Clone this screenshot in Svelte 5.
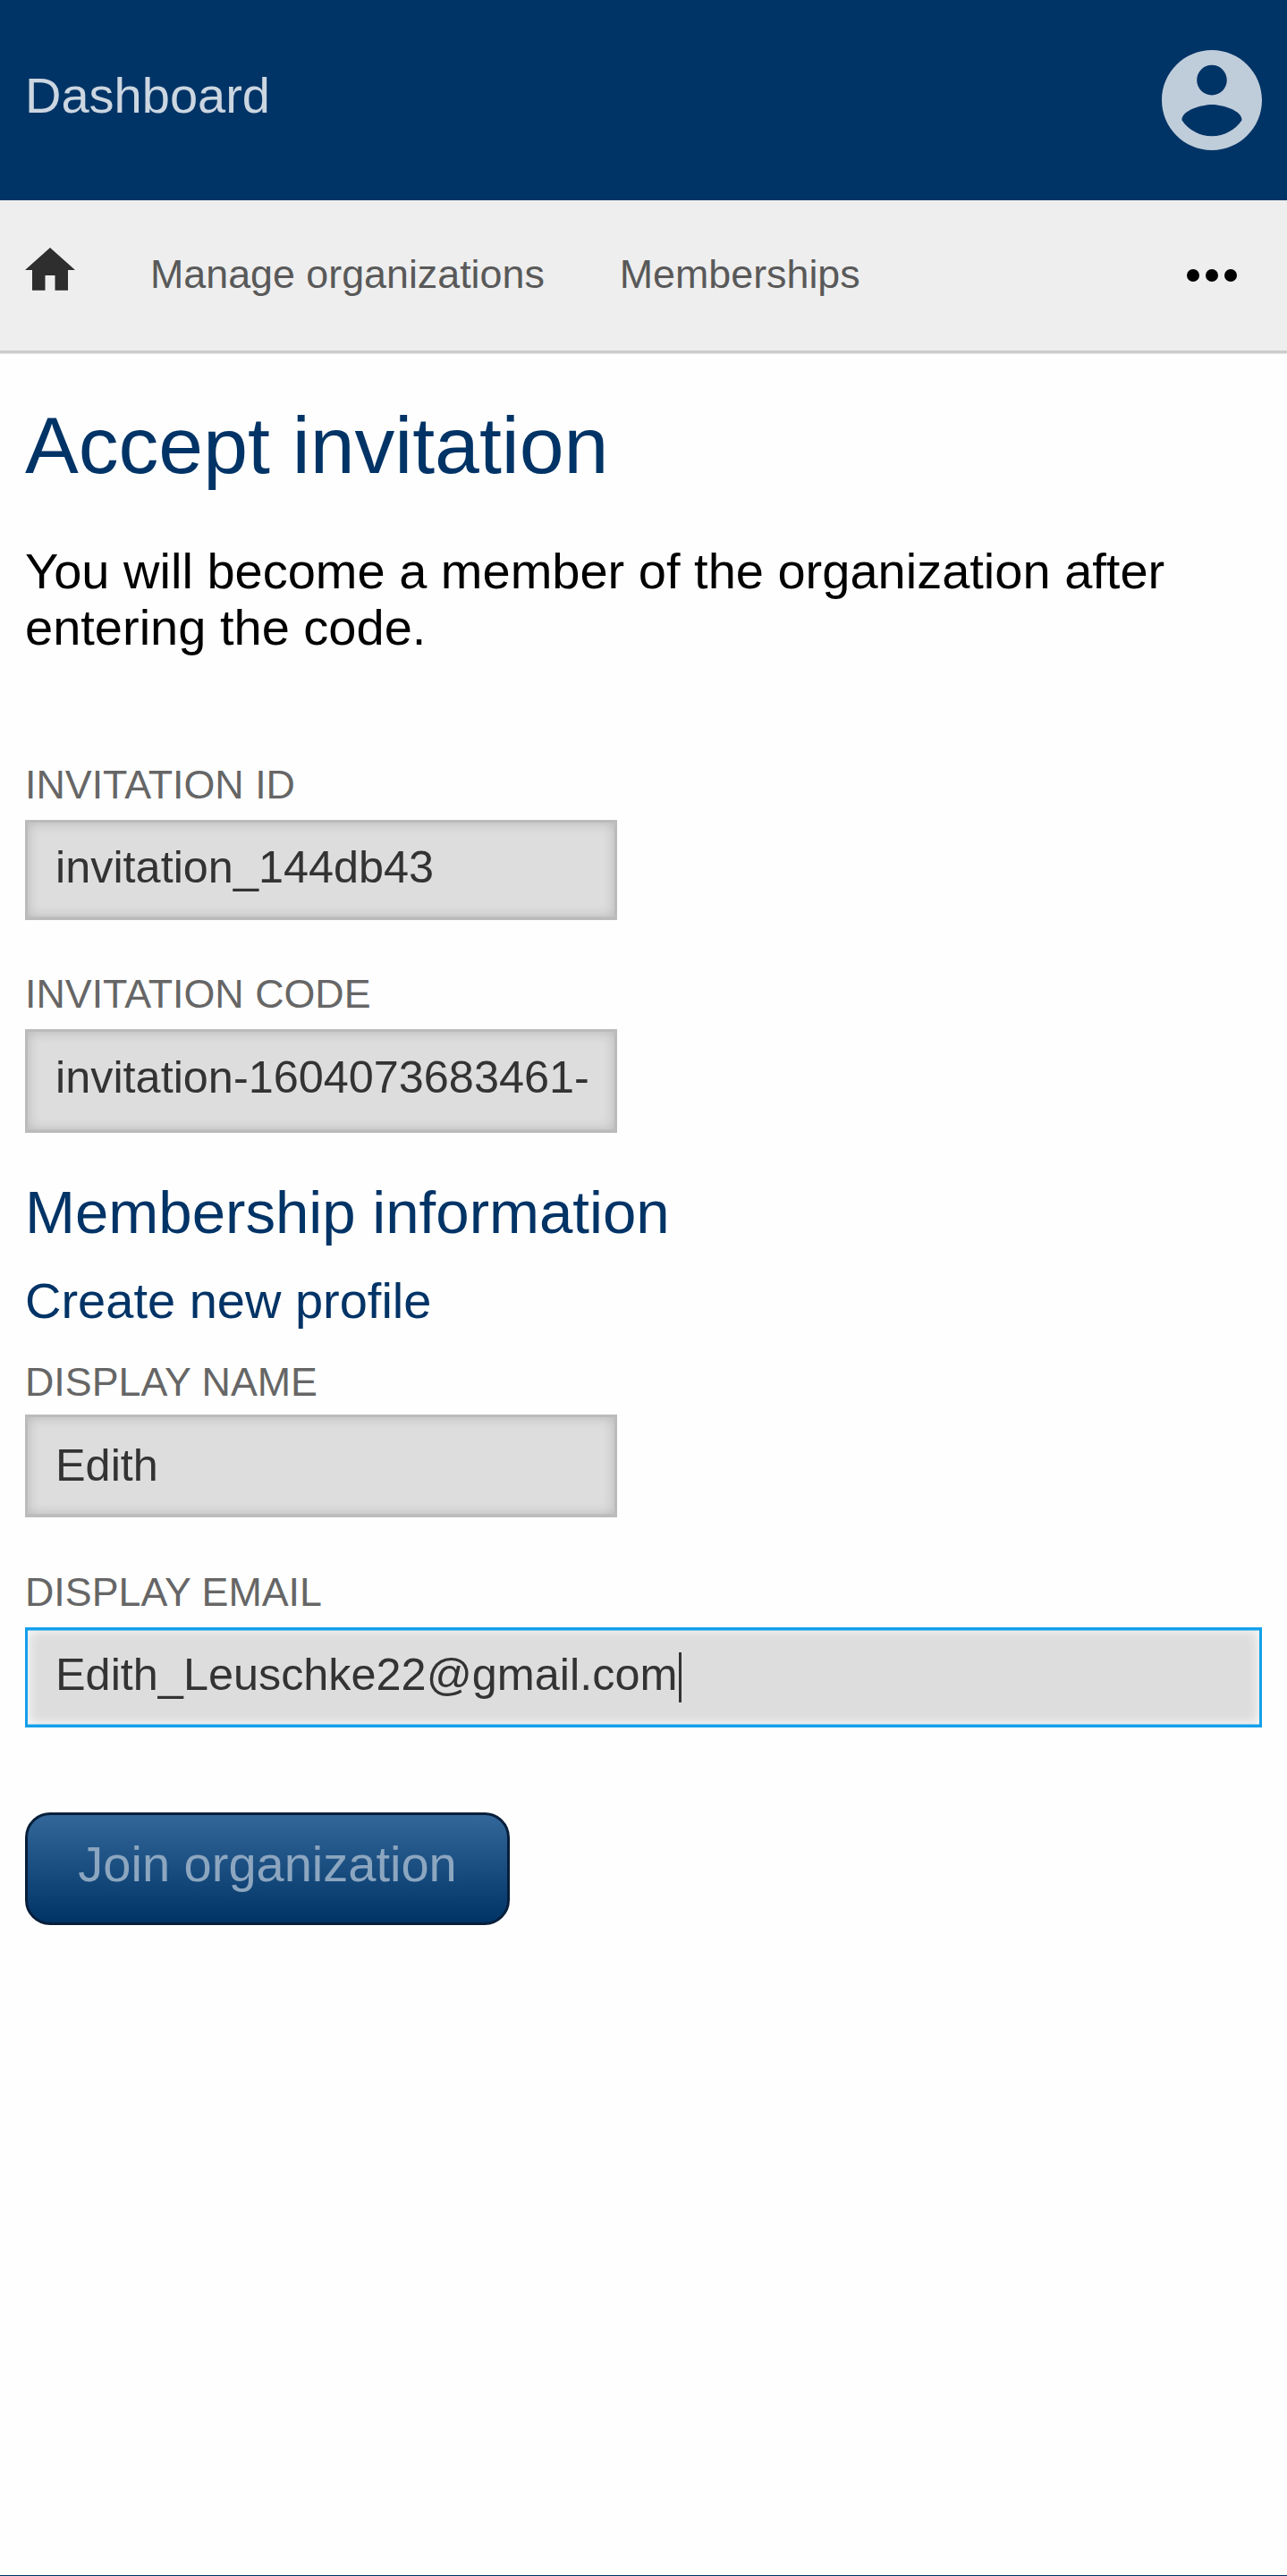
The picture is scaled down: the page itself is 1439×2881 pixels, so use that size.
<script>
  const navItems = ['Manage organizations', 'Memberships'];
</script>

{#snippet field(id, label, value, variant)}
  <div class="field {variant}">
    <span class="label" {id}>{label}</span>
    <div class="input" role="textbox" aria-labelledby={id}>
      <span>{value}</span>
      {#if variant === 'focused'}<i class="caret"></i>{/if}
    </div>
  </div>
{/snippet}

<div class="page">
  <header class="topbar">
    <span class="brand">Dashboard</span>
    <svg class="avatar" viewBox="2 2 20 20" aria-label="Account">
      <path d="M12 2C6.48 2 2 6.48 2 12s4.48 10 10 10 10-4.48 10-10S17.52 2 12 2zm0 3c1.66 0 3 1.34 3 3s-1.34 3-3 3-3-1.34-3-3 1.34-3 3-3zm0 14.2c-2.5 0-4.71-1.28-6-3.22.03-1.99 4-3.08 6-3.08 1.99 0 5.97 1.09 6 3.08-1.29 1.94-3.5 3.22-6 3.22z" />
    </svg>
  </header>

  <nav class="nav">
    <svg class="home" viewBox="0 0 56 48" aria-label="Home">
      <path d="M28 0 56 25H48V47.7H33.5V31H22.5V47.7H8V25H0Z" />
    </svg>
    {#each navItems as item}
      <span class="nav-item">{item}</span>
    {/each}
    <svg class="more" viewBox="0 0 56 14" aria-label="More">
      <circle cx="7" cy="7" r="7" />
      <circle cx="28" cy="7" r="7" />
      <circle cx="49" cy="7" r="7" />
    </svg>
  </nav>

  <main class="content">
    <h1>Accept invitation</h1>
    <p class="intro">You will become a member of the organization after entering the code.</p>

    {@render field('invitation-id', 'Invitation ID', 'invitation_144db43', 'plain')}
    {@render field('invitation-code', 'Invitation code', 'invitation-1604073683461-', 'code')}

    <h2>Membership information</h2>
    <h3>Create new profile</h3>

    {@render field('display-name', 'Display name', 'Edith', 'name')}
    {@render field('display-email', 'Display email', 'Edith_Leuschke22@gmail.com', 'focused')}

    <button class="submit">Join organization</button>
  </main>
</div>

<style>
  :global(body) {
    background: #fefefe;
  }

  .page {
    box-sizing: border-box;
    height: 2881px;
    border-bottom: 1px solid #036;
    font-family: 'Liberation Sans', Arial, sans-serif;
    font-size: 56px;
    color: #000;
  }

  .topbar {
    box-sizing: border-box;
    height: 224px;
    padding: 0 28px;
    display: flex;
    align-items: center;
    justify-content: space-between;
    background: #036;
  }

  .brand {
    line-height: 63px;
    padding-bottom: 11px;
    color: #ccd6e0;
  }

  .avatar {
    width: 112px;
    height: 112px;
    fill: #bfccd9;
  }

  .nav {
    box-sizing: border-box;
    height: 171px;
    padding: 0 56px 0 28px;
    display: flex;
    align-items: center;
    gap: 84px;
    background: #eee;
    border-bottom: 3px solid #ccc;
    box-shadow: 0 1px #e5e5e5;
    font-size: 44.8px;
    color: #595959;
  }

  .home {
    width: 56px;
    height: 48px;
    margin-bottom: 14px;
    fill: #2e2e2e;
  }

  .nav-item {
    line-height: 51px;
    padding-bottom: 3px;
  }

  .more {
    width: 56px;
    height: 14px;
    margin-left: auto;
  }

  .content {
    padding: 1px 28px 0;
  }

  h1,
  h2,
  h3,
  p {
    margin: 0;
    font-weight: normal;
  }

  h1,
  h2,
  h3 {
    color: #036;
  }

  h1 {
    padding-top: 52px;
    font-size: 89.6px;
    line-height: 100px;
  }

  .intro {
    padding-top: 59px;
    margin-bottom: 119px;
    line-height: 63px;
  }

  .field {
    display: flex;
    flex-direction: column;
    align-items: flex-start;
    margin-bottom: 57px;
  }

  .label {
    margin-bottom: 14px;
    font-size: 44.8px;
    line-height: 51px;
    text-transform: uppercase;
    color: #666;
  }

  .input {
    box-sizing: border-box;
    width: 662px;
    height: 112px;
    padding: 21px 28px 0 31px;
    display: flex;
    align-items: flex-start;
    white-space: nowrap;
    overflow: hidden;
    font-size: 50.4px;
    line-height: 57px;
    color: #333;
    background: #ddd;
    border: 3px solid #bbb;
    box-shadow:
      inset 0 -1px rgba(187, 187, 187, 0.6),
      inset 0 0 14px rgba(0, 0, 0, 0.18);
  }

  .code {
    margin-bottom: 51px;
  }

  .code .input {
    height: 116px;
    padding-top: 22px;
  }

  .name {
    margin-bottom: 58px;
  }

  .name .label {
    margin-bottom: 11px;
  }

  .name .input {
    height: 115px;
    padding-top: 25px;
  }

  .focused {
    margin-bottom: 0;
  }

  .focused .input {
    width: 100%;
    border-color: #139fea;
    box-shadow:
      inset 0 1px rgba(19, 159, 234, 0.5),
      inset 0 -1px rgba(19, 159, 234, 0.5),
      inset 0 0 14px #fff;
  }

  .caret {
    width: 3px;
    height: 56px;
    margin: 4px 0 0 2px;
    background: #333;
  }

  h2 {
    font-size: 67.2px;
    line-height: 75px;
  }

  h3 {
    padding-top: 30px;
    margin-bottom: 34px;
    font-size: 56px;
    line-height: 63px;
  }

  .submit {
    display: block;
    box-sizing: border-box;
    width: 542px;
    height: 126px;
    margin-top: 94.5px;
    padding: 0 0 10px;
    font: inherit;
    line-height: 63px;
    color: #8ca6c0;
    background: linear-gradient(#369, #036);
    border: 3px solid #071f3a;
    border-radius: 28px;
  }
</style>
